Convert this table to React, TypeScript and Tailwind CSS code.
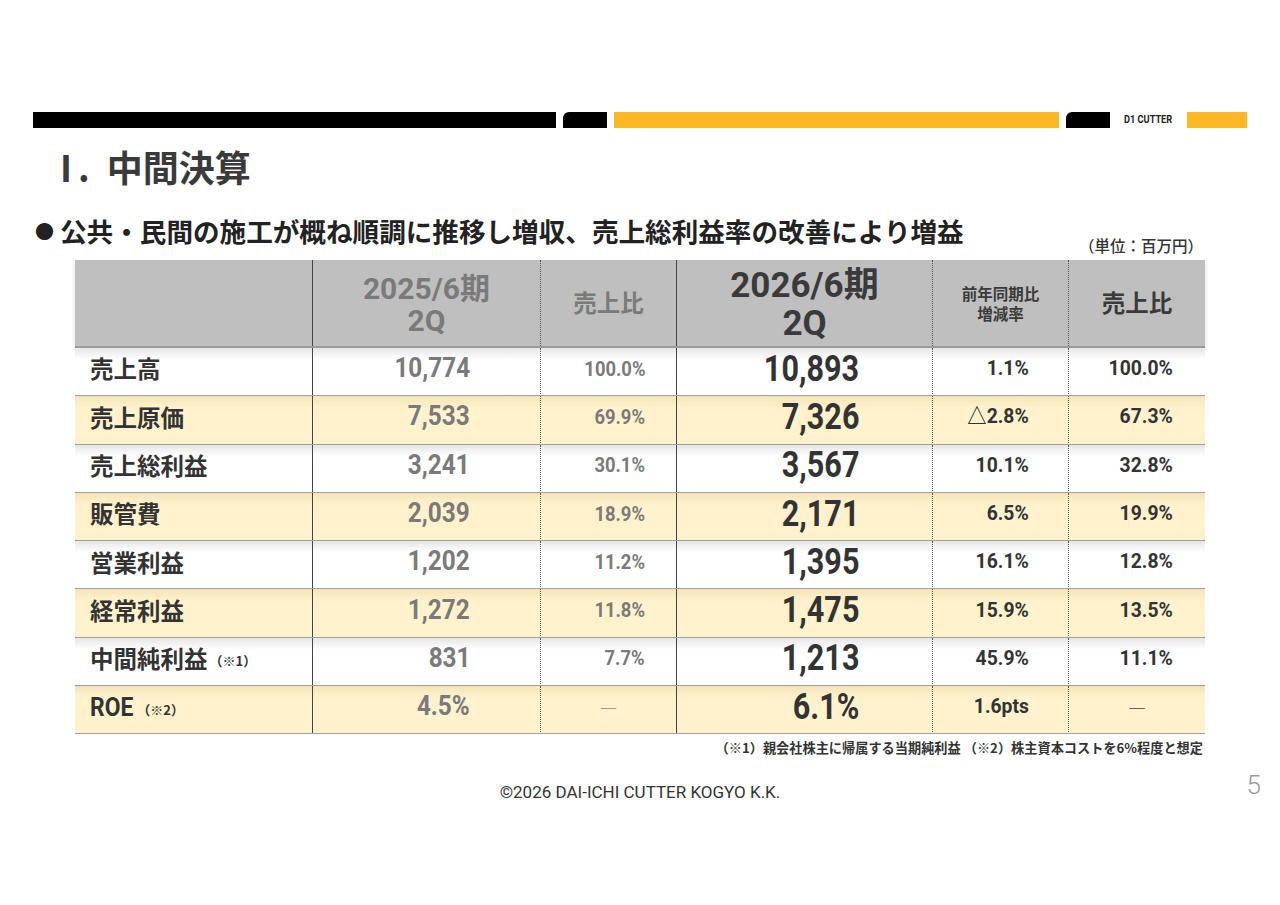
const rows = [
  { label: "売上高", note: "", a: "10,774", b: "100.0%", c: "10,893", d: "1.1%", e: "100.0%" },
  { label: "売上原価", note: "", a: "7,533", b: "69.9%", c: "7,326", d: "△2.8%", e: "67.3%" },
  { label: "売上総利益", note: "", a: "3,241", b: "30.1%", c: "3,567", d: "10.1%", e: "32.8%" },
  { label: "販管費", note: "", a: "2,039", b: "18.9%", c: "2,171", d: "6.5%", e: "19.9%" },
  { label: "営業利益", note: "", a: "1,202", b: "11.2%", c: "1,395", d: "16.1%", e: "12.8%" },
  { label: "経常利益", note: "", a: "1,272", b: "11.8%", c: "1,475", d: "15.9%", e: "13.5%" },
  { label: "中間純利益", note: "（※1）", a: "831", b: "7.7%", c: "1,213", d: "45.9%", e: "11.1%" },
  { label: "ROE", note: "（※2）", a: "4.5%", b: "―", c: "6.1%", d: "1.6pts", e: "―" },
];

const jp = "font-['Noto_Sans_CJK_JP',sans-serif]";
const num = "font-['Roboto','Noto_Sans_CJK_JP',sans-serif]";
const cols = "grid-cols-[238px_228px_136px_256px_136px_136px]";

// dashes sit in the middle of the cell, numbers hug the right edge
function Cell({ value, pad, size, color, scale, border }: { value: string; pad: string; size: string; color: string; scale: string; border: string }) {
  if (value === "―") {
    return (
      <div className={`flex items-center justify-center pb-[6px] ${border} text-[18px] leading-none ${color === "text-[#333]" ? "text-[#444]" : "text-[#888]"} ${jp}`}>
        {value}
      </div>
    );
  }
  return (
    <div className={`flex items-center justify-end pb-[7px] ${border} ${pad}`}>
      <span className={`inline-block origin-right leading-none font-bold ${scale} ${size} ${color} ${num}`}>{value}</span>
    </div>
  );
}

function TopBar() {
  return (
    <div className="flex h-4 items-stretch pl-[33px]">
      <div className="w-[523px] bg-black" />
      <div className="ml-[7px] w-[44px] rounded-tl-[6px] bg-black" />
      <div className="ml-[7px] w-[445px] bg-[#fdb823]" />
      <div className="ml-[7px] w-[44px] rounded-tl-[6px] bg-black" />
      <div className="ml-[14px] flex w-[54px] items-center whitespace-nowrap">
        <span className={`inline-block origin-left scale-x-[0.8] text-[11.5px] leading-none font-bold text-[#222] ${num}`}>
          D1 CUTTER
        </span>
      </div>
      <div className="ml-[9px] w-[60px] bg-[#fdb823]" />
    </div>
  );
}

export default function App() {
  return (
    <div className={`relative h-[905px] w-[1280px] overflow-hidden bg-white text-[#333] ${jp}`}>
      <div className="h-[112px]" />
      <TopBar />

      <h1 className="mt-[16px] flex items-baseline pl-[48px] text-[36px] leading-[44px] font-bold text-[#3a3a3a]">
        <span className="tracking-[-14px]">Ⅰ</span>
        <span className="ml-[8px]">.</span>
        <span className="ml-[17px]">中間決算</span>
      </h1>

      <div className="mt-[27px] flex items-end justify-between pl-[35px] pr-[77px]">
        <p className="flex items-center text-[26.6px] leading-[32px] font-bold text-[#222]">
          <span className="text-[19px]">●</span>
          <span className="ml-[6px]">公共・民間の施工が概ね順調に推移し増収、売上総利益率の改善により増益</span>
        </p>
        <p className="mb-[-8px] text-[15.5px] leading-[20px] font-medium text-[#333]">（単位：百万円）</p>
      </div>

      <div className="ml-[75px] mt-[13px] w-[1130px]">
        <div className={`grid h-[88px] ${cols} border-b-2 border-[#9a9a9a] bg-[#bfbfbf] shadow-[0_3px_4px_rgba(0,0,0,0.15)]`}>
          <div className="border-r border-[#444]" />
          <div className="flex flex-col items-center justify-center border-r border-dotted border-[#555] text-[30px] leading-[32px] font-bold text-[#7a7a7a]">
            <span className={num}>2025/6<span className={jp}>期</span></span>
            <span className={num}>2Q</span>
          </div>
          <div className="flex items-center justify-center border-r border-[#444] text-[23.5px] leading-none font-bold text-[#7a7a7a]">
            売上比
          </div>
          <div className="flex flex-col items-center justify-center border-r border-dotted border-[#555] text-[35px] leading-[38px] font-bold text-[#3a3a3a]">
            <span className={num}>2026/6<span className={jp}>期</span></span>
            <span className={num}>2Q</span>
          </div>
          <div className="flex flex-col items-center justify-center border-r border-dotted border-[#555] text-[15.5px] leading-[20px] font-bold text-[#3a3a3a]">
            <span>前年同期比</span>
            <span>増減率</span>
          </div>
          <div className="flex items-center justify-center text-[23.5px] leading-none font-bold text-[#3a3a3a]">
            売上比
          </div>
        </div>

        {rows.map((r, i) => (
          <div
            key={r.label}
            className={`grid h-[48.3px] grid-rows-[48.3px] ${cols} overflow-hidden border-b border-[#a0a0a0] ${
              i % 2 === 1
                ? "bg-gradient-to-b from-[#f3e4b8] via-[#fff2cc] via-[25%] to-[#fff2cc]"
                : "bg-gradient-to-b from-[#e6e6e6] via-white via-[25%] to-white"
            }`}
          >
            <div className="flex items-center border-r border-[#444] pb-[6px] pl-[15px]">
              {r.label === "ROE" ? (
                <span className={`inline-block origin-left scale-x-[0.88] text-[26px] leading-none font-bold text-[#333] ${num}`}>{r.label}</span>
              ) : (
                <span className="text-[23.5px] leading-none font-bold text-[#333]">{r.label}</span>
              )}
              {r.note && (
                <span className={`mt-[4px] text-[13px] leading-none font-bold text-[#333] ${r.label === "ROE" ? "ml-[-2px]" : "ml-[2px]"}`}>{r.note}</span>
              )}
            </div>
            <Cell value={r.a} pad="pr-[70px]" size="text-[27px]" color="text-[#7a7a7a]" scale="scale-x-[0.9]" border="border-r border-dotted border-[#555]" />
            <Cell value={r.b} pad="pr-[31px]" size="text-[20px]" color="text-[#7a7a7a]" scale="scale-x-[0.92]" border="border-r border-[#444]" />
            <Cell value={r.c} pad="pr-[73px]" size="text-[36px]" color="text-[#333]" scale="scale-x-[0.85]" border="border-r border-dotted border-[#555]" />
            <Cell value={r.d} pad="pr-[39px]" size="text-[21px]" color="text-[#333]" scale="scale-x-[0.92]" border="border-r border-dotted border-[#555]" />
            <Cell value={r.e} pad="pr-[32px]" size="text-[21px]" color="text-[#333]" scale="scale-x-[0.92]" border="" />
          </div>
        ))}
      </div>

      <p className="mt-[4px] pr-[77px] text-right text-[13.2px] leading-[20px] font-bold text-[#333]">
        （※1）親会社株主に帰属する当期純利益 （※2）株主資本コストを6%程度と想定
      </p>

      <div className="relative mt-[22px] flex h-[24px] items-center justify-center">
        <p className={`text-[17px] text-[#333] ${num}`}>©2026 DAI-ICHI CUTTER KOGYO K.K.</p>
        <span className={`absolute right-[19px] top-[-14px] text-[26px] font-light text-[#999] ${num}`}>5</span>
      </div>
    </div>
  );
}
